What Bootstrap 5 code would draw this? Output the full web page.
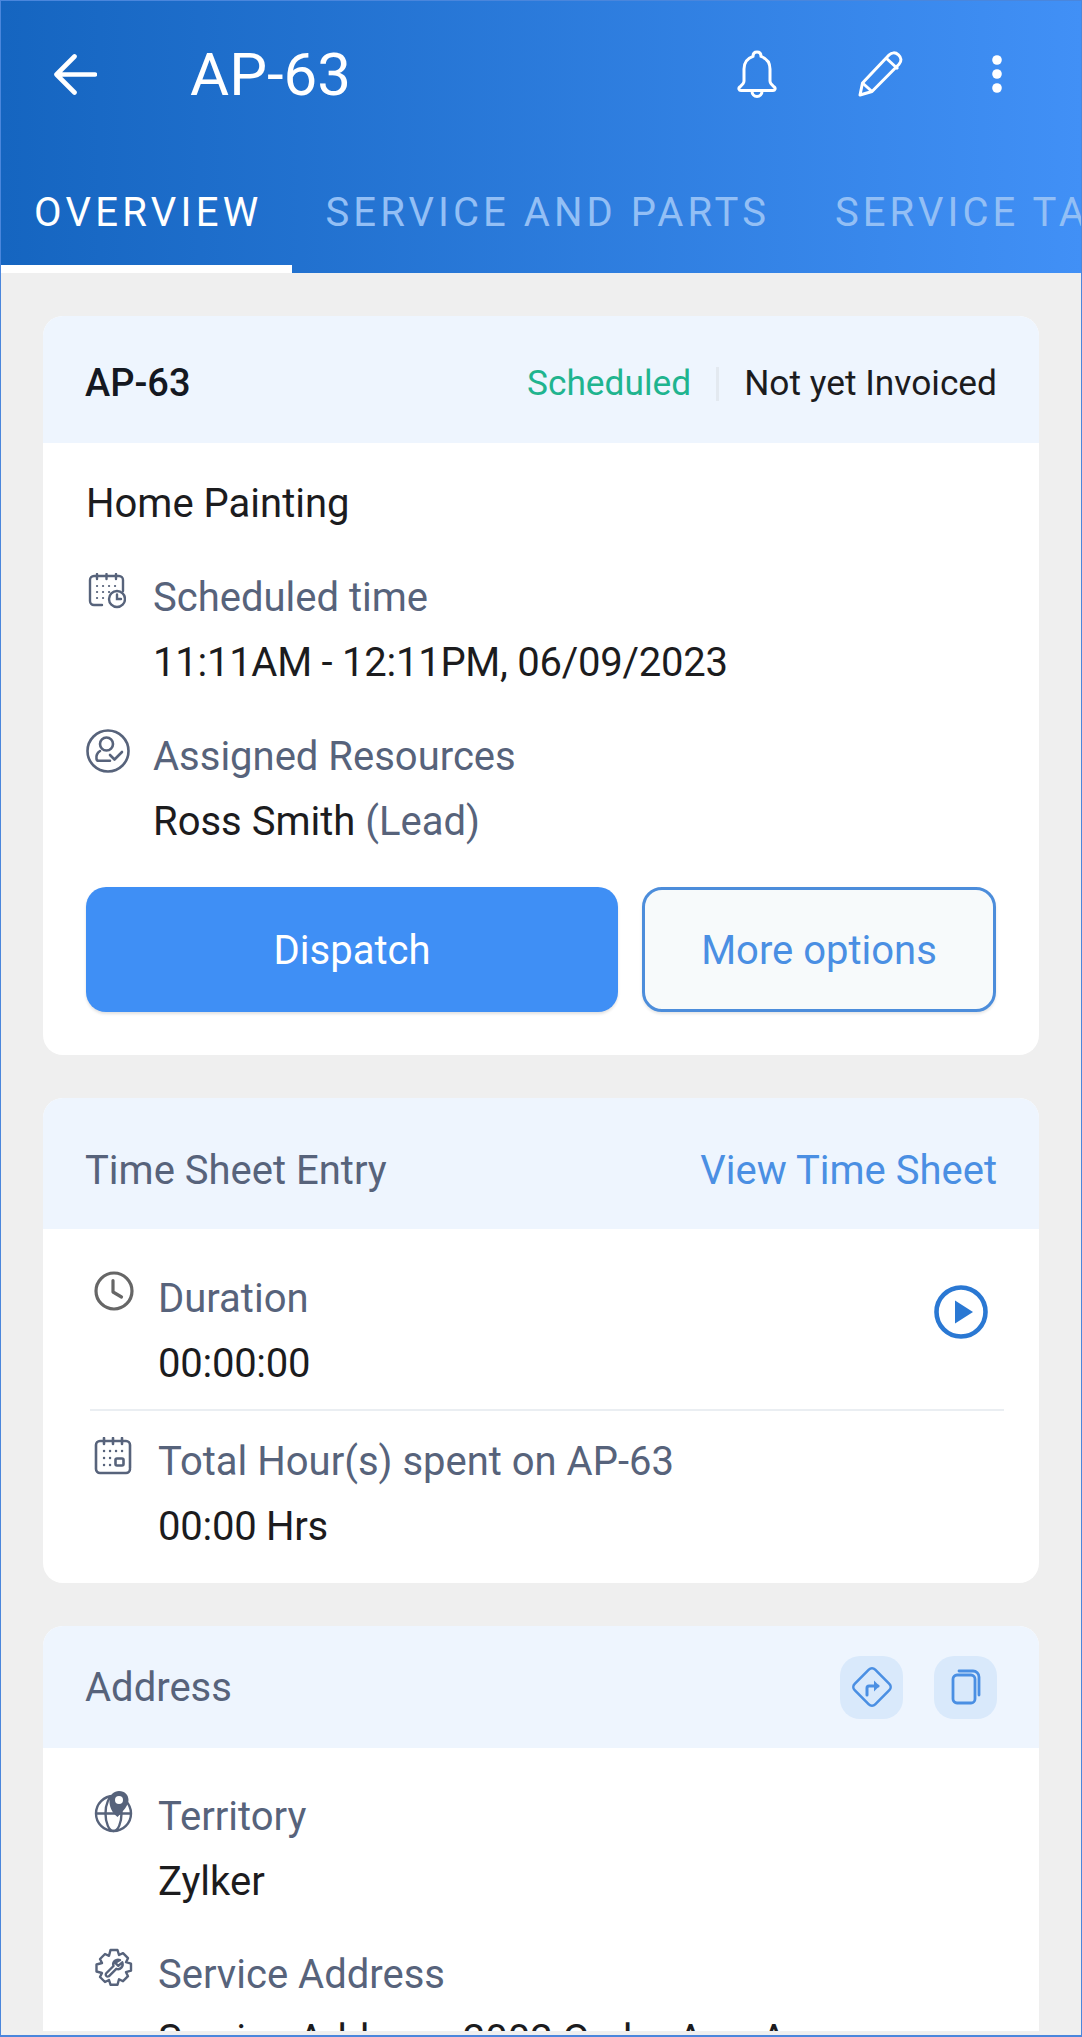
<!DOCTYPE html>
<html lang="en">
<head>
<meta charset="utf-8">
<title>AP-63</title>
<link href="https://cdn.jsdelivr.net/npm/bootstrap@5.3.0/dist/css/bootstrap.min.css" rel="stylesheet">
<style>
html,body{height:100%;margin:0;overflow:hidden;background:#efefef;font-family:Roboto,"Liberation Sans",sans-serif}
.app-frame{position:relative;height:100vh;display:flex;flex-direction:column;background:#efefef;overflow:hidden}
.app-frame::after{content:"";position:absolute;inset:0;border:1px solid #4a86dc;border-bottom-width:2px;pointer-events:none}
.app-head{background:linear-gradient(90deg,#1565c0,#4190f6);flex:none;color:#fff}
.app-bar{height:148px;padding:0 80px 0 54px}
.app-title{font-size:60px;font-weight:400;margin:2px 0 0 93px;line-height:1}
.tab-strip{height:125px;flex-wrap:nowrap;overflow:hidden}
.tab-item{flex:none;font-size:40px;letter-spacing:4.05px;color:#93bff5;padding:2px 31px 0 34px;height:125px;line-height:125px;white-space:nowrap;border-bottom:8px solid transparent}
.tab-item.active-tab{color:#fff;border-bottom-color:#fff;padding-right:29px;letter-spacing:4.3px}
.page-body{flex:1 1 0;min-height:0;overflow:hidden;margin-bottom:6px;padding:43px 43px 0;background:#efefef}
.info-card{border:0;border-radius:20px;background:#fff;margin-bottom:43px;overflow:hidden;font-size:40px;line-height:65px;color:#1c1c1e}
.info-card .card-header{background:#eef5fe;border:0;border-radius:0;padding:0 42px;display:flex;align-items:center;justify-content:space-between}
.h-127{height:127px;padding-top:8px!important}.h-131{height:131px;padding-top:13px!important}.h-122{height:122px}
.head-id{font-weight:500;color:#141821;font-size:38px}
.head-muted{color:#57637b}
.status-ok{color:#1fb48f;font-size:35.3px}
.status-sep{width:3px;height:34px;background:#e3e9f0;margin:0 25px}
.status-bill{font-size:35.3px}
.link-act{color:#4a8fe3;text-decoration:none}
.lbl{color:#57637b}
.digit-run{letter-spacing:-.25px}
.fact-row{display:flex;margin-top:29px}
.fact-row svg{flex:none;display:block}
.fact-icon{width:67px;flex:none;padding-top:8px}
.cal-shift{padding-left:2px}
.wide-row .fact-icon{width:64px}
.wide-row{margin-top:0;padding-left:4px}
.card-one{padding:28px 43px 43px}
.card-two{padding:37px 0 24px 47px}
.card-three{padding:36px 0 0 47px}
.act-primary{background:#3f8ff5;color:#fff;border:0;border-radius:20px;height:125px;font-size:40px;width:532px;padding-top:8px;box-shadow:0 2px 3px rgba(0,0,0,.12)}
.act-outline{background:#f7fafb;color:#4a8fe3;border:3px solid #4c8ddb;border-radius:20px;height:125px;font-size:40px;width:354px;padding-top:8px;box-shadow:0 2px 3px rgba(0,0,0,.1)}
.act-row{margin-top:33px;gap:24px}
.rule-line{height:2px;background:#eaeef2;margin:13px 0 18px 0;width:914px}
.play-btn{margin-left:auto;margin-right:51px;padding-top:19px}
.sq-group{gap:31px}
.sq-btn{width:63px;height:63px;border-radius:20px;background:#d9e9fb;border:0;padding:0;display:flex;align-items:center;justify-content:center}
</style>
</head>
<body>
<div class="app-frame">
  <header class="app-head">
    <div class="app-bar d-flex align-items-center">
      <svg width="43" height="41" viewBox="0 0 43 41" fill="none" stroke="#fff" stroke-width="4.6" stroke-linecap="round" stroke-linejoin="round"><path d="M41 20.5H3M20.5 2.5 2.5 20.5l18 18"/></svg>
      <h1 class="app-title">AP-63</h1>
      <svg class="ms-auto" width="42" height="48" viewBox="0 0 42 48" fill="none" stroke="#fff" stroke-width="3" stroke-linejoin="round"><path d="M21 2c-2.600 0-4 1.800-4 4.400C11 8.500 8 13 8 19v12c0 2.500-2 4-4.300 6-1.500 1.300-.8 3.500 1.300 3.500h32c2.100 0 2.800-2.200 1.300-3.500C36 35 34 33.500 34 31V19c0-6-3-10.500-9-12.600C25 3.800 23.600 2 21 2Z"/><path d="M16 41c0 3.500 2.200 5.500 5 5.500s5-2 5-5.500"/></svg>
      <svg class="pencil-ic" width="46" height="46" viewBox="0 0 46 46" fill="none" stroke="#fff" stroke-width="3" stroke-linejoin="round" style="margin-left:80px"><path d="M2 44l2.500-12L31 4c2.700-2.800 6.500-2.800 9.500-.2 3 2.700 3.300 6.500.5 9.500L14 40.500Z"/><path d="M28 7l12 11M4.500 32 14 40.500"/></svg>
      <svg width="10" height="38" viewBox="0 0 10 38" fill="#fff" style="margin-left:88px"><circle cx="5" cy="5" r="4.800"/><circle cx="5" cy="19" r="4.800"/><circle cx="5" cy="33" r="4.800"/></svg>
    </div>
    <nav class="nav tab-strip">
      <span class="tab-item active-tab">OVERVIEW</span>
      <span class="tab-item">SERVICE AND PARTS</span>
      <span class="tab-item">SERVICE TASKS</span>
    </nav>
  </header>
  <main class="page-body">
    <section class="card info-card">
      <div class="card-header h-127">
        <span class="head-id">AP-63</span>
        <span class="d-flex align-items-center"><span class="status-ok">Scheduled</span><span class="status-sep"></span><span class="status-bill">Not yet Invoiced</span></span>
      </div>
      <div class="card-body card-one">
        <div>Home Painting</div>
        <div class="fact-row">
          <div class="fact-icon cal-shift"><svg width="38" height="36" viewBox="0 0 38 36" fill="none" stroke="#57637b" stroke-width="2.400" stroke-linecap="round"><path d="M14 32H6a4 4 0 0 1-4-4V7a4 4 0 0 1 4-4h25a4 4 0 0 1 4 4v11"/><path d="M9 1v5M18.500 1v5M28 1v5"/><circle cx="29" cy="26" r="8"/><path d="M29 21.500V26h4"/><path d="M9 13h.1M15 13h.1M21 13h.1M27 13h.1M9 19h.1M15 19h.1M21 19h.1M9 25h.1M15 25h.1" stroke-width="2.200"/></svg></div>
          <div><div class="lbl">Scheduled time</div><div class="digit-run">11:11AM - 12:11PM, 06/09/2023</div></div>
        </div>
        <div class="fact-row">
          <div class="fact-icon" style="padding-top:5px"><svg width="44" height="44" viewBox="0 0 44 44" fill="none" stroke="#57637b" stroke-width="2.600" stroke-linecap="round" stroke-linejoin="round"><circle cx="22" cy="22" r="20.500"/><circle cx="20.500" cy="15" r="6.500"/><path d="M14 22c-3 2-4 5-3.500 8 .2 1.200 1 1.800 2.200 1.800H24"/><path d="M24 26l4.500 4.500L36 23"/></svg></div>
          <div><div class="lbl">Assigned Resources</div><div>Ross Smith <span class="lbl">(Lead)</span></div></div>
        </div>
        <div class="d-flex act-row">
          <button type="button" class="btn act-primary">Dispatch</button>
          <button type="button" class="btn act-outline">More options</button>
        </div>
      </div>
    </section>
    <section class="card info-card">
      <div class="card-header h-131">
        <span class="head-muted">Time Sheet Entry</span>
        <a href="#" class="link-act">View Time Sheet</a>
      </div>
      <div class="card-body card-two">
        <div class="fact-row wide-row">
          <div class="fact-icon" style="padding-top:5px"><svg width="40" height="40" viewBox="0 0 40 40" fill="none" stroke="#666" stroke-width="3.200" stroke-linecap="round" stroke-linejoin="round"><circle cx="20" cy="20" r="18"/><path d="M19 9.500V21l8.500 5"/></svg></div>
          <div><div class="lbl">Duration</div><div class="digit-run">00:00:00</div></div>
          <div class="play-btn"><svg width="54" height="54" viewBox="0 0 54 54"><circle cx="27" cy="27" r="24.500" fill="none" stroke="#2a78d3" stroke-width="4.600"/><path d="M21 15.500 39 27 21 38.500Z" fill="#2a78d3"/></svg></div>
        </div>
        <div class="rule-line"></div>
        <div class="fact-row wide-row">
          <div class="fact-icon"><svg width="38" height="38" viewBox="0 0 38 38" fill="none" stroke="#57637b" stroke-width="2.600" stroke-linecap="round"><path d="M36 32a4 4 0 0 1-4 4H6a4 4 0 0 1-4-4V8a4 4 0 0 1 4-4h26a4 4 0 0 1 4 4v23"/><path d="M10 1v6M19 1v6M28 1v6"/><rect x="21.500" y="21.500" width="8" height="7" rx="1.500"/><path d="M10 14h.1M16 14h.1M22 14h.1M28 14h.1M10 21h.1M16 21h.1M10 28h.1M16 28h.1" stroke-width="2.400"/></svg></div>
          <div><div class="lbl">Total Hour(s) spent on AP-63</div><div class="digit-run">00:00 Hrs</div></div>
        </div>
      </div>
    </section>
    <section class="card info-card">
      <div class="card-header h-122">
        <span class="head-muted">Address</span>
        <span class="d-flex sq-group">
          <button type="button" class="sq-btn" aria-label="Directions"><svg width="44" height="44" viewBox="0 0 44 44" fill="none" stroke="#4a8fe3" stroke-width="2.600" stroke-linejoin="round" stroke-linecap="round"><rect x="7.500" y="7.500" width="29" height="29" rx="4.500" transform="rotate(45 22 22)"/><path d="M17 30v-7a2 2 0 0 1 2-2h9" stroke-width="3"/><path d="M24 15.500l5.500 5.500-5.500 5.500" fill="#4a8fe3" stroke="none"/></svg></button>
          <button type="button" class="sq-btn" aria-label="Copy"><svg width="30" height="36" viewBox="0 0 30 36" fill="none" stroke="#4a8fe3" stroke-width="2.800" stroke-linecap="round" stroke-linejoin="round"><rect x="2" y="6" width="22" height="28" rx="4"/><path d="M8 2h14a6 6 0 0 1 6 6v18"/></svg></button>
        </span>
      </div>
      <div class="card-body card-three">
        <div class="fact-row wide-row">
          <div class="fact-icon" style="padding-top:7px"><svg width="40" height="42" viewBox="0 0 40 42" fill="none" stroke="#57637b" stroke-width="2.400"><circle cx="19.500" cy="22.500" r="17.500"/><ellipse cx="19.500" cy="22.500" rx="8" ry="17.500"/><path d="M2 22.500h35"/><path d="M25 0c6 0 9.500 4 9.500 9 0 5-5 11-11 17C18 22 15 15 15.500 9.500 16 3.500 20 0 25 0Z" fill="#57637b" stroke="none"/><circle cx="25" cy="9" r="4" fill="#fff" stroke="none"/></svg></div>
          <div><div class="lbl">Territory</div><div>Zylker</div></div>
        </div>
        <div class="fact-row wide-row" style="margin-top:28px">
          <div class="fact-icon" style="padding-top:6px"><svg width="40" height="40" viewBox="0 0 40 40" fill="none" stroke="#57637b" stroke-width="2.400" stroke-linejoin="round" stroke-linecap="round"><path d="M16.500 2h7l1.500 5 4-1.800 5 5-2 4 5 1.500v7l-5 1.500 2 4-5 5-4-2-1.500 5.500h-7L15 32l-4 2-5-5 2-4-5.500-1.500v-7L8 15l-2-4 5-5 4 1.800Z"/><path d="M26 12c-4-1.500-8 2-6.500 6L12 25.500c-1 2 .8 3.800 2.800 2.800l7.500-7.500c4 1.500 7.500-2.500 6-6.500l-4 3.500-3-3Z"/></svg></div>
          <div><div class="lbl">Service Address</div><div>Service Address, 2002 Cedar Ave, Ap</div></div>
        </div>
      </div>
    </section>
  </main>
</div>
<script src="https://cdn.jsdelivr.net/npm/bootstrap@5.3.0/dist/js/bootstrap.bundle.min.js"></script>
</body>
</html>
